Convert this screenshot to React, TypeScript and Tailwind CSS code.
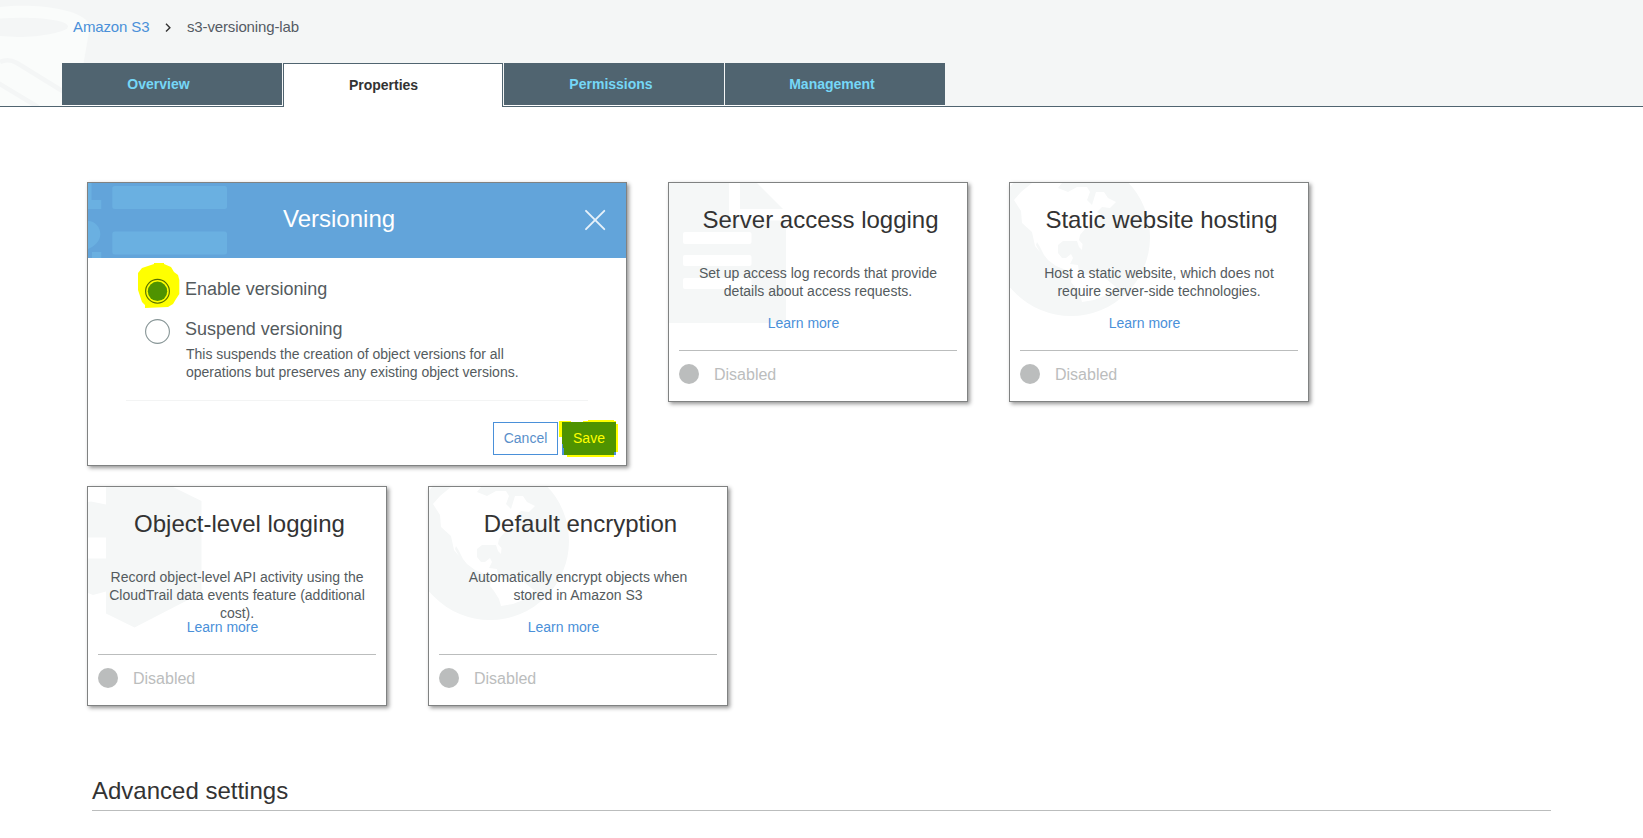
import type { ReactNode } from "react";

const TABS = ["Overview", "Properties", "Permissions", "Management"];

function Bucket() {
  return (
    <svg className="absolute left-0 top-0" width="100" height="106" viewBox="0 0 100 106" fill="none">
      <path d="M0 7C32 3 76 8 87 21Q90 25 89 32L76 106H0Z" fill="#fafcfb" />
      <path d="M0 18.5C30 16 66 19 68 26C69 32 40 37 18 37L0 36Z" fill="#f4f6f6" />
      <path d="M0 62Q8 58 17 63L64 92M-2 83L38 107" stroke="#f4f6f6" strokeWidth="4.5" />
    </svg>
  );
}

function DocumentArt() {
  return (
    <svg className="absolute left-0 top-0" width="150" height="150" viewBox="0 0 150 150">
      <path d="M71 0H88L114 26H71ZM0 0H60V37.5H117V136Q117 140 113 140H0Z" fill="#f5f7f7" />
      <g fill="#fff">
        <rect x="14" y="49" width="68.5" height="12" rx="2" />
        <rect x="14" y="72" width="68.5" height="11" rx="2" />
        <rect x="14" y="95" width="68.5" height="11" rx="2" />
      </g>
    </svg>
  );
}

function GlobeArt() {
  return (
    <svg className="absolute left-0 top-0" width="150" height="150" viewBox="0 0 150 150">
      <circle cx="61" cy="54" r="79" fill="#f5f7f7" />
      <path
        d="M4 17L11 9L22 0H52L48 5L58 9L67 4L77 4L80 9L77 17L82 22L86 9L94 9L98 15L106 19L100 25L92 24L87 29L93 33L86 40L75 46L70 52L69 57L72.500 61L72 67L69 64L67 58L60 58L53 58L48 62L48 70L52 75L56 75L61 71L63 75L60 81L68 82L69 89L75 92L83 91L95 95L101 100L106 104L100 110L94 113L84 117L72 119L70 112L65 104L61 99L63 90L56 87L46 83L38 77L34 72L30 64L27 59L26 62L30 69L25 63L22 49L12 40L11 28Z"
        fill="#fff"
      />
    </svg>
  );
}

function CubeArt() {
  return (
    <svg className="absolute left-0 top-0" width="150" height="150" viewBox="0 0 150 150">
      <path
        d="M18 0H85L113.500 14V106L46.500 140.500L18 126.500V104.500L5 108L0 106V71.500H18V50.500H0V15L3 14.500L18 17.500Z"
        fill="#f5f7f7"
      />
    </svg>
  );
}

function ListArt() {
  return (
    <svg className="absolute left-0 top-0" width="150" height="75" viewBox="0 0 150 75" fill="#6ab0e1">
      <rect x="24.300" y="3" width="114.700" height="23" rx="2.500" />
      <rect x="24.300" y="48.500" width="114.700" height="23" rx="2.500" />
      <path d="M0 0H3.500V17H13.300V26H0ZM0 38C7 38 12.300 44 12.300 51C12.300 58 7 63 0 66ZM4 69H13.300V75H4Z" />
    </svg>
  );
}

type CardProps = { title: string; art: ReactNode; children: ReactNode };

function Card({ title, art, children }: CardProps) {
  return (
    <section className="relative flex h-[220px] w-[300px] flex-col border border-[#808282] bg-white px-[10px] pt-[23px] shadow-[2px_2px_4px_rgba(0,0,0,0.42)]">
      {art}
      <h2 className="relative pl-[5px] text-center text-[24px] leading-[27px] text-[#333]">{title}</h2>
      <p className="relative mt-[31px] h-[50px] px-[8px] text-center text-[14px] leading-[18px] text-[#545b5e]">{children}</p>
      <a className="relative pr-[29px] text-center text-[14px] leading-[18px] text-[#4a90d9]">Learn more</a>
      <div className="mt-[18px] h-px bg-[#bbbdbd]" />
      <div className="mt-[13px] flex items-start gap-[15px]">
        <span className="size-5 rounded-full bg-[#bbbdbd]" />
        <span className="pt-px text-[16px] leading-[20px] text-[#bbbdbd]">Disabled</span>
      </div>
    </section>
  );
}

function VersioningPanel() {
  return (
    <section className="h-[284px] w-[540px] border border-[#808282] bg-white shadow-[2px_2px_4px_rgba(0,0,0,0.42)]">
      <header className="relative flex h-[75px] items-start justify-between bg-[#62a4da] pl-[195px] pr-[20px] pt-[22px]">
        <ListArt />
        <h2 className="relative text-[24px] leading-[27px] text-white">Versioning</h2>
        <svg className="mt-[4px]" width="22" height="22" viewBox="0 0 22 22">
          <path d="M2 1.800L20.300 20.200M20.300 1.800L2 20.200" stroke="#e6f1fa" strokeWidth="1.900" strokeLinecap="round" />
        </svg>
      </header>
      <div className="relative flex h-[142px] flex-col pl-[57px] pt-[20px]">
        <svg className="absolute left-[49px] top-[4px]" width="44" height="48" viewBox="0 0 44 48">
          <path
            d="M1 11L5 6L11 4L17 2V1H27V2L34 5L37 10L41 13L42.300 18V32L39 37L36 42L31 45L8 46V43L5 40L3 34L1 28Z"
            fill="#ff0"
          />
        </svg>
        <div className="relative flex gap-[15px]">
          <svg width="25" height="26" viewBox="0 0 25 26">
            <circle cx="12.500" cy="13.300" r="12" fill="#ebe900" />
            <circle cx="12.500" cy="13.300" r="11" fill="#ff0" />
            <circle cx="12.500" cy="13.300" r="11.900" fill="none" stroke="#567000" strokeWidth="1.100" />
            <circle cx="12.500" cy="13.300" r="9.700" fill="#4f9300" />
          </svg>
          <span className="pt-px text-[18px] leading-[20px] tracking-[-0.05px] text-[#545b5e]">Enable versioning</span>
        </div>
        <div className="mt-[14px] flex gap-[15px]">
          <svg className="mt-[1px]" width="25" height="25" viewBox="0 0 25 25">
            <circle cx="12.500" cy="12.500" r="11.900" fill="#fff" stroke="#879596" strokeWidth="1.100" />
          </svg>
          <div className="flex flex-col">
            <span className="pt-px text-[18px] leading-[20px] tracking-[-0.03px] text-[#545b5e]">Suspend versioning</span>
            <p className="mt-[6px] w-[345px] pl-[1px] text-[14px] leading-[18px] tracking-[-0.01px] text-[#545b5e]">
              This suspends the creation of object versions for all operations but preserves any existing object versions.
            </p>
          </div>
        </div>
      </div>
      <div className="mx-[38px] h-px bg-[#f3f4f4]" />
      <footer className="mt-[21px] flex justify-end gap-[4px] pr-[10px] text-[14px] leading-[31px]">
        <button className="h-[33px] w-[65px] border border-[#4a90d9] bg-white text-[#5a8fca]">Cancel</button>
        <button className="relative h-[33px] w-[54px] bg-[#4f9300] text-[#ff0]">
          <svg className="absolute -left-[3px] -top-[2px]" width="60" height="38" viewBox="0 0 60 38">
            <path d="M0 1H12V2H24V1H29V0H55V1H57V4H59V32H57V34H55V37H8V35H3V17H0Z" fill="#ff0" />
            <path d="M3 2H57V35H3Z" fill="#4f9300" />
            <path d="M3 24H4V28H5V35H3ZM55 32H57V35H55Z" fill="#4a90d9" />
          </svg>
          <span className="relative">Save</span>
        </button>
      </footer>
    </section>
  );
}

function Tab({ label }: { label: string }) {
  if (label === "Properties") {
    return (
      <div className="h-[44px] w-[220px] border border-b-0 border-[#506470] bg-white pr-[19px] leading-[42px] text-[#333]">{label}</div>
    );
  }
  const offset = label === "Overview" ? "pr-[27px]" : "pr-[6px]";
  return (
    <div className={`h-[43px] w-[220px] border-b border-white bg-[#506470] bg-clip-padding leading-[42px] text-[#75d7f7] ${offset}`}>
      {label}
    </div>
  );
}

export default function App() {
  return (
    <main className="h-[838px] overflow-hidden bg-white font-['Liberation_Sans',Arial,sans-serif]">
      <header className="relative flex h-[107px] flex-col border-b border-[#506470] bg-[#f4f6f6]">
        <Bucket />
        <nav className="relative flex h-[63px] shrink-0 items-start pl-[73px] pt-[18px] text-[15px] leading-[18px] text-[#545b64]">
          <a className="w-[77px] tracking-[-0.12px] text-[#4a90d9]">Amazon S3</a>
          <svg className="ml-[15px] mr-[16px] mt-[5px]" width="6" height="10" viewBox="0 0 6 10" fill="none">
            <path d="M1 0.800L4.900 4.700L1 8.600" stroke="#333" strokeWidth="1.400" />
          </svg>
          <span className="tracking-[-0.14px]">s3-versioning-lab</span>
        </nav>
        <div className="relative flex shrink-0 items-start gap-px pl-[62px] text-center text-[14px] font-bold">
          {TABS.map((tab) => (
            <Tab key={tab} label={tab} />
          ))}
        </div>
      </header>
      <div className="ml-[87px] mt-[75px] flex flex-col gap-[20px]">
        <div className="flex gap-[41px]">
          <VersioningPanel />
          <Card title="Server access logging" art={<DocumentArt />}>
            Set up access log records that provide details about access requests.
          </Card>
          <Card title="Static website hosting" art={<GlobeArt />}>
            Host a static website, which does not require server-side technologies.
          </Card>
        </div>
        <div className="flex gap-[41px]">
          <Card title="Object-level logging" art={<CubeArt />}>
            Record object-level API activity using the CloudTrail data events feature (additional cost).
          </Card>
          <Card title="Default encryption" art={<GlobeArt />}>
            Automatically encrypt objects when
            <br />
            stored in Amazon S3
          </Card>
        </div>
      </div>
      <h2 className="ml-[92px] mt-[71px] h-[34px] w-[1459px] border-b border-[#bbbdbd] text-[24px] leading-[27px] text-[#333]">
        Advanced settings
      </h2>
    </main>
  );
}
